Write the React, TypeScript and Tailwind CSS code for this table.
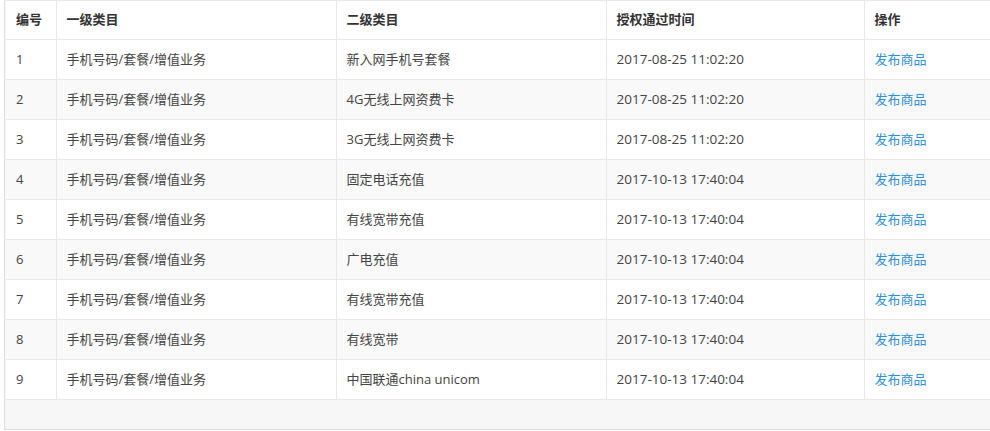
import React from "react";

const rows = [
  { id: 1, sub: "新入网手机号套餐", time: "2017-08-25 11:02:20" },
  { id: 2, sub: "4G无线上网资费卡", time: "2017-08-25 11:02:20" },
  { id: 3, sub: "3G无线上网资费卡", time: "2017-08-25 11:02:20" },
  { id: 4, sub: "固定电话充值", time: "2017-10-13 17:40:04" },
  { id: 5, sub: "有线宽带充值", time: "2017-10-13 17:40:04" },
  { id: 6, sub: "广电充值", time: "2017-10-13 17:40:04" },
  { id: 7, sub: "有线宽带充值", time: "2017-10-13 17:40:04" },
  { id: 8, sub: "有线宽带", time: "2017-10-13 17:40:04" },
  { id: 9, sub: "中国联通china unicom", time: "2017-10-13 17:40:04" },
];

function App() {
  return (
    <div
      className="w-[990px] h-[431px] overflow-hidden bg-white text-[13px] text-[#444]"
      style={{ fontFamily: '"Open Sans", "Noto Sans CJK SC", sans-serif' }}
    >
      <div className="ml-[4px] h-[430px] border-l border-b border-[#dcdcdc] bg-[#f7f7f7] pl-[1px]">
        <table className="w-[990px] border-collapse table-fixed bg-white">
          <colgroup>
            <col className="w-[50px]" />
            <col className="w-[280px]" />
            <col className="w-[270px]" />
            <col className="w-[258px]" />
            <col />
          </colgroup>
          <thead>
            <tr className="h-[39px] border-t border-b border-[#e8e8e8]">
              {["编号", "一级类目", "二级类目", "授权通过时间", "操作"].map((h, i) => (
                <th
                  key={h}
                  className={`px-[10px] text-left font-semibold text-[#333] ${
                    i > 0 ? "border-l border-[#e8e8e8]" : ""
                  }`}
                >
                  {h}
                </th>
              ))}
            </tr>
          </thead>
          <tbody>
            {rows.map((r) => (
              <tr
                key={r.id}
                className={`h-[40px] border-b border-[#e8e8e8] ${
                  r.id % 2 === 0 ? "bg-[#f9f9f9]" : "bg-white"
                }`}
              >
                <td className="px-[10px]">{r.id}</td>
                <td className="px-[10px] border-l border-[#e8e8e8]">手机号码/套餐/增值业务</td>
                <td className="px-[10px] border-l border-[#e8e8e8]">{r.sub}</td>
                <td className="px-[10px] border-l border-[#e8e8e8] text-[13.5px]">{r.time}</td>
                <td className="px-[10px] border-l border-[#e8e8e8]">
                  <a className="text-[#2d8fe0] cursor-pointer">发布商品</a>
                </td>
              </tr>
            ))}
          </tbody>
        </table>
      </div>
    </div>
  );
}

export default App;
